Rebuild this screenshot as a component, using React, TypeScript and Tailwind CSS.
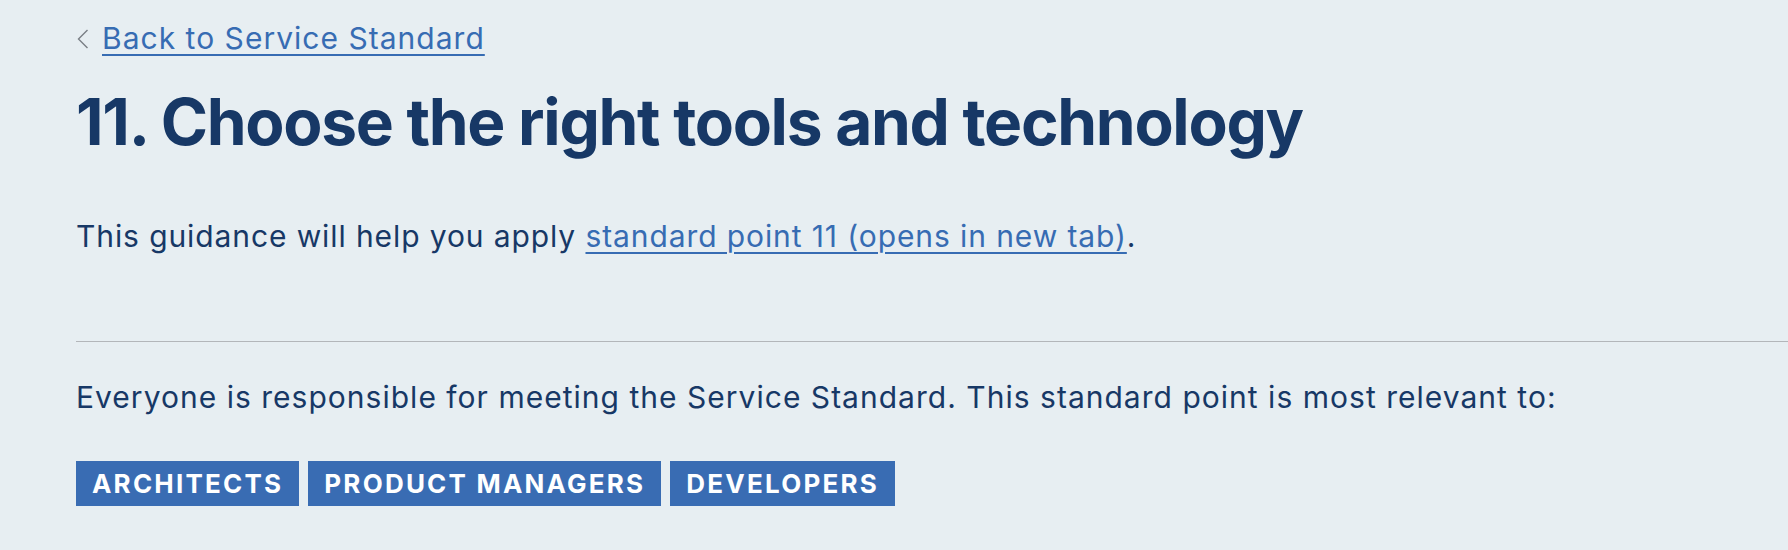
import React from "react";

export default function App() {
  const tags = ["Architects", "Product managers", "Developers"];
  return (
    <div
      className="min-h-[550px] w-full bg-[#e7eef2] text-[#173866] overflow-hidden"
      style={{ fontFamily: "Inter, 'Noto Sans', sans-serif" }}
    >
      <div className="pl-[76px] pt-[17px]">
        <div className="flex items-center h-[43px]">
          <svg width="12" height="20" viewBox="0 0 12 20" className="ml-[1px] mr-[13px]">
            <path d="M10.5 1 L1.5 10 L10.5 19" fill="none" stroke="#7a7f85" strokeWidth="1.4" />
          </svg>
          <a
            href="#"
            className="text-[30px] leading-[43px] tracking-[0.034em] text-[#376cb3] underline decoration-[2px] underline-offset-[5px]"
          >
            Back to Service Standard
          </a>
        </div>
        <h1 className="mt-[23px] text-[64px] leading-[77px] font-bold tracking-[-0.02em] text-[#173866]">
          11. Choose the right tools and technology
        </h1>
        <p className="mt-[55px] text-[30px] leading-[43px] tracking-[0.03em]">
          This guidance will help you apply{" "}
          <a href="#" className="text-[#376cb3] underline decoration-[1.5px] underline-offset-[5px]">
            standard point 11 (opens in new tab)
          </a>
          .
        </p>
        <hr className="mt-[83px] border-0 border-t border-[#b3b6ba]" />
        <p className="mt-[34px] text-[30px] leading-[43px] tracking-[0.034em]">
          Everyone is responsible for meeting the Service Standard. This standard point is most relevant to:
        </p>
        <div className="mt-[42px] flex gap-[9px]">
          {tags.map((t) => (
            <span
              key={t}
              className="h-[45px] flex items-center px-[16px] bg-[#396cb3] text-white uppercase font-bold text-[26px] tracking-[0.085em]"
            >
              {t}
            </span>
          ))}
        </div>
      </div>
    </div>
  );
}
